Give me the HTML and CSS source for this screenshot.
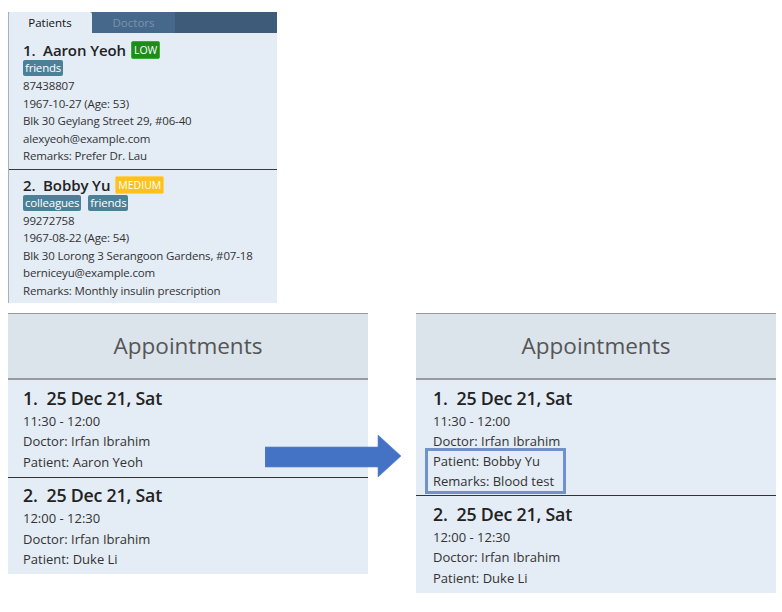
FILE: index.html
```html
<!DOCTYPE html>
<html lang="en">
<head>
<meta charset="utf-8">
<title>Patients and Appointments</title>
<link rel="stylesheet" href="styles.css">
</head>
<body>
<div class="page">
  <section class="patients">
    <div class="tabs">
      <div class="tab tab-active">Patients</div>
      <div class="tab tab-inactive">Doctors</div>
    </div>
    <div class="plist">
      <div class="pcard">
        <div class="pname">1.&nbsp; Aaron Yeoh<span class="badge badge-low">LOW</span></div>
        <div class="tags"><span class="tag">friends</span></div>
        <div class="pline">87438807</div>
        <div class="pline">1967-10-27 (Age: 53)</div>
        <div class="pline">Blk 30 Geylang Street 29, #06-40</div>
        <div class="pline">alexyeoh@example.com</div>
        <div class="pline">Remarks: Prefer Dr. Lau</div>
      </div>
      <div class="pcard">
        <div class="pname">2.&nbsp; Bobby Yu<span class="badge badge-medium">MEDIUM</span></div>
        <div class="tags"><span class="tag">colleagues</span><span class="tag">friends</span></div>
        <div class="pline">99272758</div>
        <div class="pline">1967-08-22 (Age: 54)</div>
        <div class="pline">Blk 30 Lorong 3 Serangoon Gardens, #07-18</div>
        <div class="pline">berniceyu@example.com</div>
        <div class="pline">Remarks: Monthly insulin prescription</div>
      </div>
    </div>
  </section>

  <div class="appts-row">
    <section class="appts">
      <header class="appts-head">Appointments</header>
      <div class="acard">
        <div class="atitle">1.&nbsp; 25 Dec 21, Sat</div>
        <div class="aline">11:30 - 12:00</div>
        <div class="aline">Doctor: Irfan Ibrahim</div>
        <div class="aline">Patient: Aaron Yeoh</div>
      </div>
      <div class="acard acard-last">
        <div class="atitle">2.&nbsp; 25 Dec 21, Sat</div>
        <div class="aline">12:00 - 12:30</div>
        <div class="aline">Doctor: Irfan Ibrahim</div>
        <div class="aline">Patient: Duke Li</div>
      </div>
    </section>

    <svg class="arrow" width="136" height="42" viewBox="0 0 136 42" aria-hidden="true">
      <polygon points="0,12 113,12 113,0 136,21 113,42 113,32 0,32" fill="#4472c4" stroke="#5b84cc" stroke-width="0.6"/>
    </svg>

    <section class="appts appts-after">
      <header class="appts-head">Appointments</header>
      <div class="acard">
        <div class="atitle">1.&nbsp; 25 Dec 21, Sat</div>
        <div class="aline">11:30 - 12:00</div>
        <div class="aline">Doctor: Irfan Ibrahim</div>
        <div class="highlight">
          <div class="aline">Patient: Bobby Yu</div>
          <div class="aline">Remarks: Blood test</div>
        </div>
      </div>
      <div class="acard acard-last">
        <div class="atitle">2.&nbsp; 25 Dec 21, Sat</div>
        <div class="aline">12:00 - 12:30</div>
        <div class="aline">Doctor: Irfan Ibrahim</div>
        <div class="aline">Patient: Duke Li</div>
      </div>
    </section>
  </div>
</div>
</body>
</html>
```

FILE: styles.css
```css
* { box-sizing: border-box; }

body {
  margin: 0;
  background: #ffffff;
  font-family: "Open Sans", "Noto Sans", "DejaVu Sans", sans-serif;
  color: #333;
}

.page {
  padding: 12px 0 0 8px;
}

/* ---------- Patients panel ---------- */
.patients {
  width: 269px;
  height: 291px;
  overflow: hidden;
  background: #e4ecf5;
  border-left: 1px solid #a8b0b8;
}

.tabs {
  display: flex;
  height: 21px;
  background: #3e5c7a;
}

.tab {
  width: 83px;
  font-size: 11.5px;
  line-height: 21px;
  text-align: center;
}

.tab-active {
  background: #e4ecf5;
  color: #111;
  border-radius: 2px 2px 0 0;
  margin-left: -1px;
  width: 84px;
}

.tab-inactive {
  background: #46688a;
  color: #7a94ae;
}

.plist {
  padding-top: 2px;
}

.pcard {
  padding: 5px 0 4px 14px;
  border-bottom: 1px solid #3a3a3a;
}

.pname {
  display: flex;
  align-items: center;
  height: 20px;
  font-size: 15px;
  font-weight: 600;
  color: #222;
  letter-spacing: -0.1px;
  white-space: pre;
}

.badge {
  margin-left: 5px;
  font-size: 10.5px;
  font-weight: 400;
  color: #fff;
  line-height: 14px;
  padding: 1px 2px;
  border-radius: 2px;
  letter-spacing: 0;
}

.badge-low {
  background: #1d8c1d;
  border: 1px solid #3daa3d;
}

.badge-medium {
  background: #fbc11c;
  border: 1px solid #fdd35a;
}

.tags {
  display: flex;
  gap: 7px;
  height: 17px;
  align-items: flex-start;
}

.tag {
  background: #4b8097;
  color: #fff;
  font-size: 11.5px;
  line-height: 16px;
  height: 16px;
  padding: 0 2px;
  border-radius: 2px;
  letter-spacing: -0.2px;
}

.pline {
  font-size: 11.5px;
  line-height: 17.5px;
  color: #333;
  letter-spacing: -0.15px;
  white-space: nowrap;
}

/* ---------- Appointments ---------- */
.appts-row {
  position: relative;
  display: flex;
  align-items: flex-start;
  gap: 48px;
  margin-top: 10px;
}

.appts {
  width: 360px;
  background: #e4ecf5;
}

.appts-head {
  height: 67px;
  background: #dbe3eb;
  border-top: 1px solid #9a9a9a;
  border-bottom: 2px solid #9a9a9a;
  display: flex;
  align-items: center;
  justify-content: center;
  font-size: 22.5px;
  color: #555;
  padding-bottom: 2px;
}

.acard {
  padding: 5.5px 0 4.5px 15px;
  border-bottom: 1.5px solid #333;
}

.appts-after .acard {
  padding-left: 17px;
}

.acard-last {
  border-bottom: none;
}

.atitle {
  font-size: 17.75px;
  font-weight: 600;
  line-height: 25px;
  color: #222;
  letter-spacing: -0.2px;
}

.aline {
  font-size: 13px;
  line-height: 20.5px;
  color: #333;
  letter-spacing: 0;
}

.highlight {
  width: fit-content;
  height: 46px;
  margin: -4px 0 -3px -8px;
  padding: 0 9px 0 5px;
  border: 3px solid #7191c9;
}

.arrow {
  position: absolute;
  left: 257px;
  top: 122px;
}
```
